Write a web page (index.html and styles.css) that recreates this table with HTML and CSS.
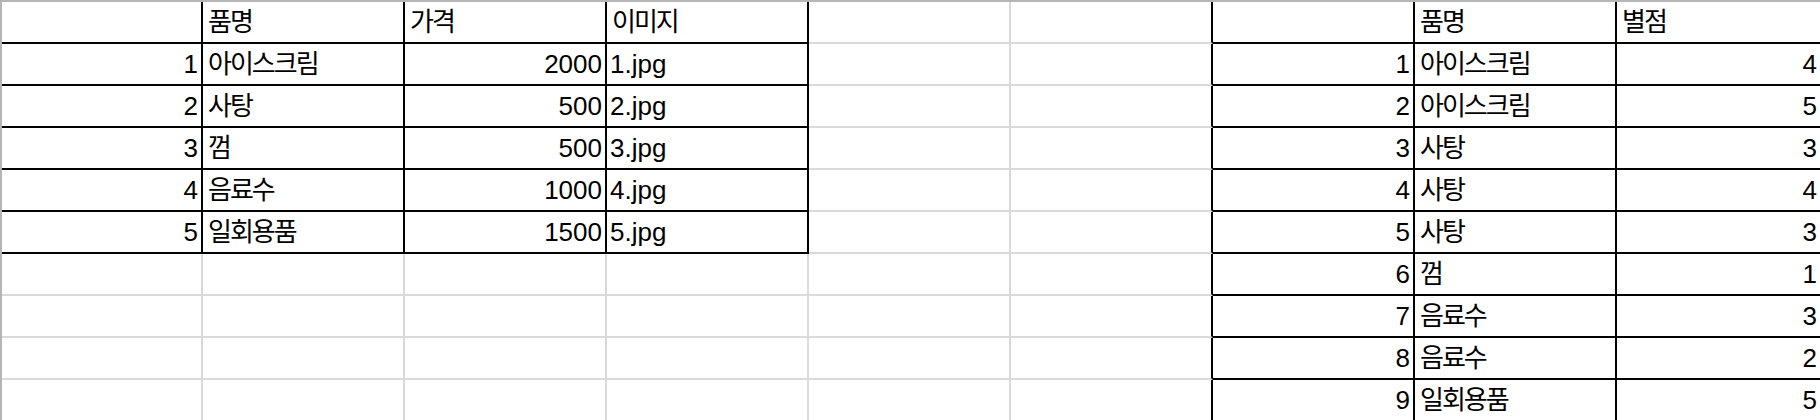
FILE: index.html
```html
<!DOCTYPE html>
<html lang="ko">
<head>
<meta charset="utf-8">
<title>Sheet</title>
<link rel="stylesheet" href="styles.css">
</head>
<body>
<div class="sheet">
  <!-- row 0 -->
  <div class="c b"></div><div class="c b ko">품명</div><div class="c b ko">가격</div><div class="c b ko">이미지</div><div class="c"></div><div class="c br"></div><div class="c b"></div><div class="c b ko">품명</div><div class="c b ko">별점</div>
  <!-- row 1 -->
  <div class="c b r">1</div><div class="c b ko">아이스크림</div><div class="c b r">2000</div><div class="c b">1.jpg</div><div class="c"></div><div class="c br"></div><div class="c b r">1</div><div class="c b ko">아이스크림</div><div class="c b r">4</div>
  <!-- row 2 -->
  <div class="c b r">2</div><div class="c b ko">사탕</div><div class="c b r">500</div><div class="c b">2.jpg</div><div class="c"></div><div class="c br"></div><div class="c b r">2</div><div class="c b ko">아이스크림</div><div class="c b r">5</div>
  <!-- row 3 -->
  <div class="c b r">3</div><div class="c b ko">껌</div><div class="c b r">500</div><div class="c b">3.jpg</div><div class="c"></div><div class="c br"></div><div class="c b r">3</div><div class="c b ko">사탕</div><div class="c b r">3</div>
  <!-- row 4 -->
  <div class="c b r">4</div><div class="c b ko">음료수</div><div class="c b r">1000</div><div class="c b">4.jpg</div><div class="c"></div><div class="c br"></div><div class="c b r">4</div><div class="c b ko">사탕</div><div class="c b r">4</div>
  <!-- row 5 -->
  <div class="c b r">5</div><div class="c b ko">일회용품</div><div class="c b r">1500</div><div class="c b">5.jpg</div><div class="c"></div><div class="c br"></div><div class="c b r">5</div><div class="c b ko">사탕</div><div class="c b r">3</div>
  <!-- row 6 -->
  <div class="c"></div><div class="c"></div><div class="c"></div><div class="c"></div><div class="c"></div><div class="c br"></div><div class="c b r">6</div><div class="c b ko">껌</div><div class="c b r">1</div>
  <!-- row 7 -->
  <div class="c"></div><div class="c"></div><div class="c"></div><div class="c"></div><div class="c"></div><div class="c br"></div><div class="c b r">7</div><div class="c b ko">음료수</div><div class="c b r">3</div>
  <!-- row 8 -->
  <div class="c"></div><div class="c"></div><div class="c"></div><div class="c"></div><div class="c"></div><div class="c br"></div><div class="c b r">8</div><div class="c b ko">음료수</div><div class="c b r">2</div>
  <!-- row 9 -->
  <div class="c"></div><div class="c"></div><div class="c"></div><div class="c"></div><div class="c"></div><div class="c br"></div><div class="c b r">9</div><div class="c b ko">일회용품</div><div class="c b r">5</div>
</div>
</body>
</html>
```
FILE: styles.css
```css
html, body {
  margin: 0;
  padding: 0;
  background: #ffffff;
  overflow: hidden;
}

.sheet {
  display: grid;
  grid-template-columns: 201px repeat(7, 202px) 205px;
  grid-auto-rows: 42px;
  border-top: 2px solid #b5b5b5;
  border-left: 2px solid #b5b5b5;
  width: max-content;
  font-family: "Liberation Sans", "Noto Sans CJK KR", sans-serif;
  font-size: 26px;
  color: #000000;
}

.c {
  box-sizing: border-box;
  display: flex;
  align-items: center;
  padding: 0 3px;
  line-height: 40px;
  white-space: nowrap;
  overflow: hidden;
  border-right: 2px solid #dadada;
  border-bottom: 2px solid #dadada;
}

.b {
  border-right-color: #000000;
  border-bottom-color: #000000;
}

.br {
  border-right-color: #000000;
}

.r {
  justify-content: flex-end;
}

.ko {
  letter-spacing: -2px;
  padding-left: 5px;
}
```
